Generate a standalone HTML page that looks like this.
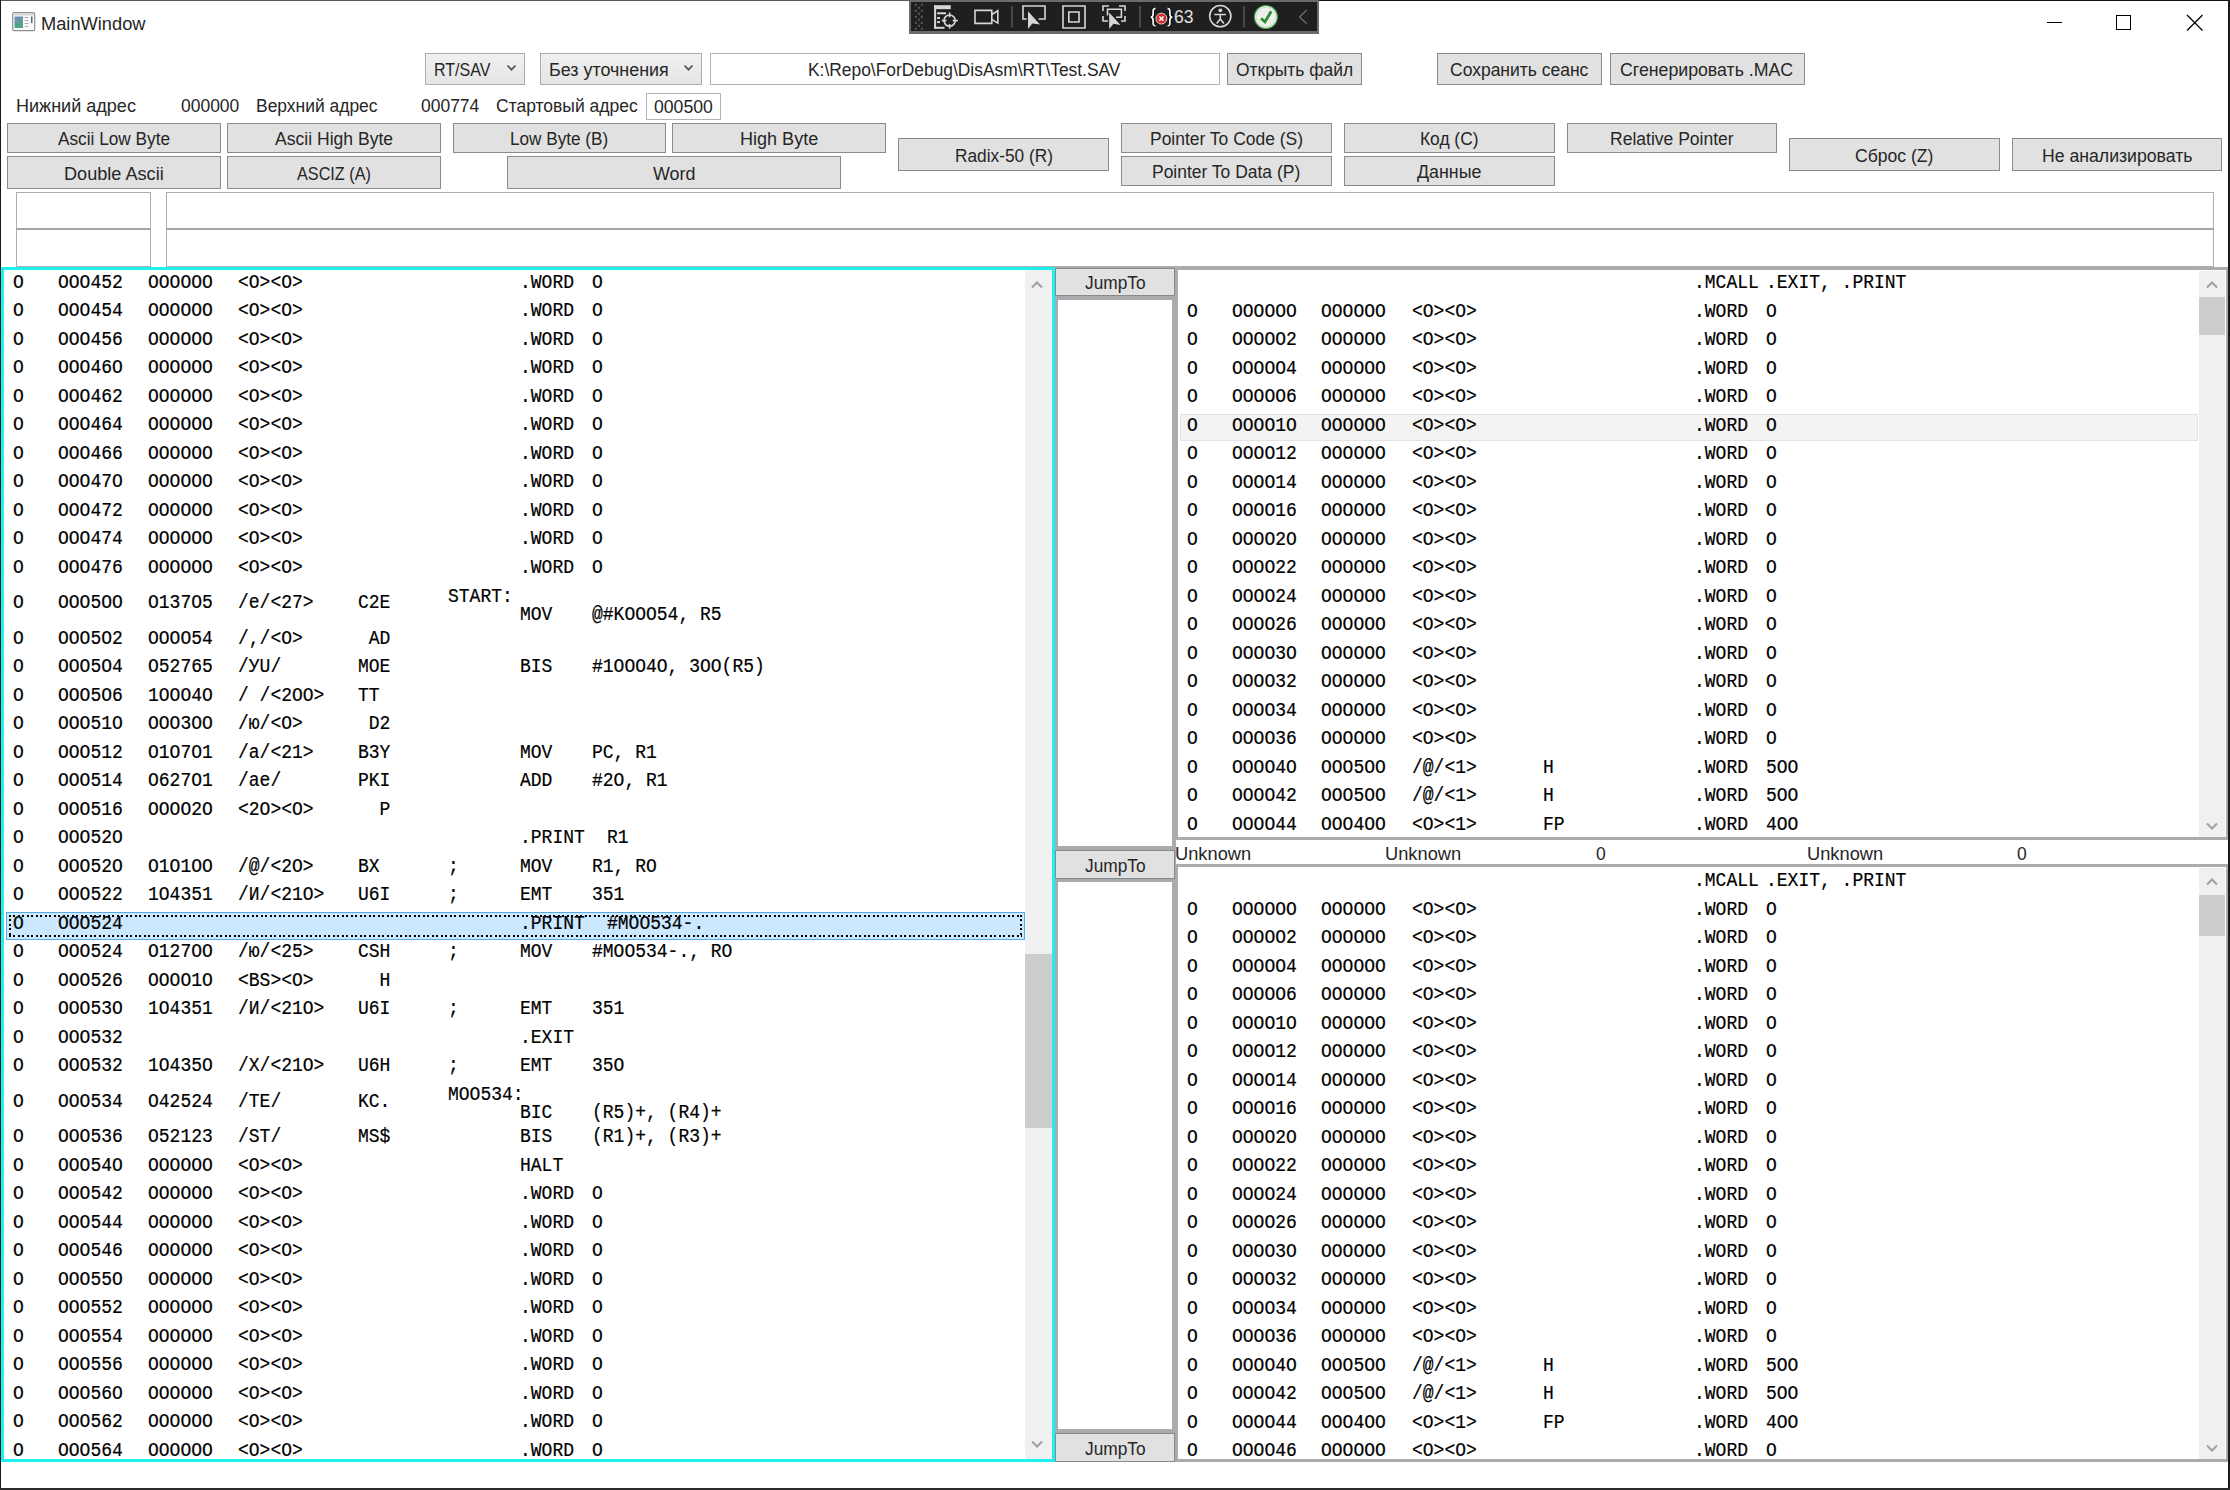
<!DOCTYPE html><html><head><meta charset="utf-8"><style>
html,body{margin:0;padding:0;background:#fff;width:2230px;height:1490px;overflow:hidden}
.a{position:absolute}
.s{position:absolute;font-family:"Liberation Sans",sans-serif;line-height:1;white-space:pre;color:#262626}
.m{position:absolute;font-family:"Liberation Mono",monospace;font-size:19.5px;line-height:1;white-space:pre;color:#000;transform:scaleX(0.9231);transform-origin:0 0;-webkit-text-stroke:0.2px #000}
</style></head><body>
<span class="s" style="left:41.16px;top:15.9px;font-size:17.5px;transform:scaleX(1.0434);transform-origin:0 0">MainWindow</span>
<svg class="a" style="left:12px;top:12px" width="24" height="20" viewBox="0 0 24 20">
<defs><linearGradient id="g1" x1="0" y1="0" x2="0" y2="1"><stop offset="0" stop-color="#6a8fb8"/><stop offset="1" stop-color="#4caa7a"/></linearGradient></defs>
<rect x="0.7" y="0.7" width="22" height="18" rx="1.5" fill="#fafafa" stroke="#8f8f8f" stroke-width="1.2"/>
<rect x="1.5" y="1.5" width="20.5" height="2" fill="#d4d6da"/>
<rect x="2.5" y="4.5" width="8.5" height="11.5" fill="url(#g1)"/>
<rect x="12.5" y="5" width="4" height="1" fill="#c9a0a0"/><rect x="12.5" y="8" width="4" height="1" fill="#b0b0b0"/><rect x="12.5" y="11" width="4" height="1" fill="#b0b0b0"/><rect x="12.5" y="14" width="4" height="1" fill="#b0b0b0"/>
<rect x="19" y="4.5" width="1.5" height="6.5" fill="#3f6a80"/>
</svg>
<div class="a" style="left:2047px;top:22px;width:15px;height:1px;background:#000;"></div>
<div class="a" style="left:2116px;top:15px;width:15px;height:15px;border:1.3px solid #000;box-sizing:border-box"></div>
<svg class="a" style="left:2186px;top:14px" width="18" height="18" viewBox="0 0 18 18"><path d="M1 1L16.5 16.5M16.5 1L1 16.5" stroke="#000" stroke-width="1.3"/></svg>
<div class="a" style="left:909px;top:0px;width:410px;height:34px;background:#6b6b6b"></div>
<div class="a" style="left:911px;top:2px;width:406px;height:29px;background:#1f1f1f"></div>
<svg class="a" style="left:909px;top:0px" width="410" height="34" viewBox="0 0 410 34">
<g fill="#5a5a5a"><rect x="5.8" y="3.7" width="2" height="2"/><rect x="5.8" y="9.8" width="2" height="2"/><rect x="5.8" y="15.8" width="2" height="2"/><rect x="5.8" y="21.9" width="2" height="2"/><rect x="5.8" y="27.7" width="2" height="2"/><rect x="11.8" y="3.7" width="2" height="2"/><rect x="11.8" y="9.8" width="2" height="2"/><rect x="11.8" y="15.8" width="2" height="2"/><rect x="11.8" y="21.9" width="2" height="2"/><rect x="11.8" y="27.7" width="2" height="2"/><rect x="8.9" y="6.8" width="2" height="2"/><rect x="8.9" y="12.7" width="2" height="2"/><rect x="8.9" y="18.7" width="2" height="2"/><rect x="8.9" y="24.8" width="2" height="2"/></g>
<g fill="#d6d6d6">
<rect x="25.1" y="5.2" width="16.6" height="4"/>
<rect x="25.1" y="5.2" width="2" height="23.5"/>
<rect x="25.1" y="26.8" width="10.4" height="2"/>
<rect x="28.1" y="12.3" width="8.9" height="2"/>
<rect x="28.1" y="17" width="2.9" height="2"/>
<rect x="28.1" y="21.1" width="2.9" height="2"/>
</g>
<g stroke="#d6d6d6" fill="none" stroke-width="1.6">
<circle cx="40.6" cy="20.6" r="5.6"/>
<path d="M32.8 20.6H37.5M43.7 20.6H48.9M40.6 12.6V17.3M40.6 23.9V28.7"/>
<path d="M66 10.4H82.8V23.4H66Z"/><path d="M82.8 14.5L88.8 10.8V23.1L82.8 19.4"/>
<path d="M117.7 19H114V6H136V19H129.6"/>
<path d="M154 6H176V28H154Z"/><path d="M159.8 12H170V22H159.8Z"/>
<path d="M200 6H194V11M210 6H216V11M194 16V21H199M216 16V21H212"/>
<path d="M198.5 15.5V9.2H212.4V17.2H207"/>
<circle cx="311.3" cy="16.1" r="10.6"/>
<path d="M305.3 14.5H317M311.3 14.5V19L307.7 23.6M311.3 19L314.9 23.6"/>
</g>
<g stroke="#4a4a4a" stroke-width="2"><path d="M102.9 6V27.6M231 6V27.6M335.1 6V27.4"/></g>
<path d="M119 11.3V29L123.3 23.6L131 24.5Z" fill="#d6d6d6"/>
<path d="M200.2 12.6V29L204.5 23.8L211.5 25.1Z" fill="#d6d6d6"/>
<circle cx="311.3" cy="10.3" r="1.9" fill="#d6d6d6"/>
<path d="M246.5 8.5C243.5 8.5 244.2 11 244.2 13.5C244.2 15.8 243.5 17 241.8 17.2C243.5 17.4 244.2 18.6 244.2 21C244.2 23.5 243.5 25.8 246.5 25.8M258.5 8.5C261.5 8.5 260.8 11 260.8 13.5C260.8 15.8 261.5 17 263.2 17.2C261.5 17.4 260.8 18.6 260.8 21C260.8 23.5 261.5 25.8 258.5 25.8" stroke="#000" stroke-width="3.2" fill="none"/><path d="M246.5 8.5C243.5 8.5 244.2 11 244.2 13.5C244.2 15.8 243.5 17 241.8 17.2C243.5 17.4 244.2 18.6 244.2 21C244.2 23.5 243.5 25.8 246.5 25.8M258.5 8.5C261.5 8.5 260.8 11 260.8 13.5C260.8 15.8 261.5 17 263.2 17.2C261.5 17.4 260.8 18.6 260.8 21C260.8 23.5 261.5 25.8 258.5 25.8" stroke="#f4f4f4" stroke-width="1.8" fill="none"/>
<circle cx="252.4" cy="18.6" r="5.4" fill="#d42a2a" stroke="#fff" stroke-width="0.8"/>
<path d="M250.3 16.5L254.5 20.7M254.5 16.5L250.3 20.7" stroke="#fff" stroke-width="1.6"/>
<text x="265" y="23" font-family="Liberation Sans" font-size="17.5" fill="#e0e0e0">63</text>
<circle cx="356.9" cy="17" r="11.5" fill="#eeeeee" stroke="#3c9c3c" stroke-width="1.2"/>
<circle cx="356.9" cy="17" r="9.8" fill="none" stroke="#bfe0bf" stroke-width="0.8"/>
<path d="M352 18.4L356 21.9L362.2 11.3" stroke="#2b8f2b" stroke-width="2.8" fill="none"/>
<path d="M397.7 10L390.6 16.9L397.7 23.8" stroke="#6a6a6a" stroke-width="1.4" fill="none"/>
</svg>
<div class="a" style="left:425px;top:53px;width:100px;height:32px;background:linear-gradient(#f0f0f0,#e5e5e5);border:1.5px solid #acacac;box-sizing:border-box;"></div>
<span class="s" style="left:434.18px;top:61.9px;font-size:17.5px;transform:scaleX(0.9164);transform-origin:0 0">RT/SAV</span>
<svg class="a" style="left:505.5px;top:64px" width="11" height="8" viewBox="0 0 11 8"><path d="M1.5 1.5L5.5 5.7L9.5 1.5" stroke="#505050" stroke-width="1.7" fill="none"/></svg>
<div class="a" style="left:540px;top:53px;width:162px;height:32px;background:linear-gradient(#f0f0f0,#e5e5e5);border:1.5px solid #acacac;box-sizing:border-box;"></div>
<span class="s" style="left:548.88px;top:61.9px;font-size:17.5px;transform:scaleX(1.0226);transform-origin:0 0">Без уточнения</span>
<svg class="a" style="left:682.5px;top:64px" width="11" height="8" viewBox="0 0 11 8"><path d="M1.5 1.5L5.5 5.7L9.5 1.5" stroke="#505050" stroke-width="1.7" fill="none"/></svg>
<div class="a" style="left:710px;top:53px;width:510px;height:32px;background:#fff;border:1.5px solid #b4b4b4;box-sizing:border-box;"></div>
<span class="s" style="left:808.11px;top:61.9px;font-size:17.5px;transform:scaleX(0.9936);transform-origin:0 0">K:\Repo\ForDebug\DisAsm\RT\Test.SAV</span>
<div class="a" style="left:1227px;top:53px;width:135px;height:32px;background:#e1e1e1;border:1.5px solid #8a8a8a;box-sizing:border-box;"></div>
<span class="s" style="left:1235.61px;top:62.2px;font-size:17.5px;transform:scaleX(0.9948);transform-origin:0 0">Открыть файл</span>
<div class="a" style="left:1437px;top:53px;width:165px;height:32px;background:#e1e1e1;border:1.5px solid #8a8a8a;box-sizing:border-box;"></div>
<span class="s" style="left:1450.00px;top:62.2px;font-size:17.5px;transform:scaleX(0.9993);transform-origin:0 0">Сохранить сеанс</span>
<div class="a" style="left:1610px;top:53px;width:195px;height:32px;background:#e1e1e1;border:1.5px solid #8a8a8a;box-sizing:border-box;"></div>
<span class="s" style="left:1620.39px;top:62.2px;font-size:17.5px;transform:scaleX(1.0130);transform-origin:0 0">Сгенерировать .MAC</span>
<span class="s" style="left:16.27px;top:98.3px;font-size:17.5px;transform:scaleX(1.0304);transform-origin:0 0">Нижний адрес</span>
<span class="s" style="left:180.50px;top:98.3px;font-size:17.5px;transform:scaleX(0.9982);transform-origin:0 0">000000</span>
<span class="s" style="left:256.30px;top:98.3px;font-size:17.5px;transform:scaleX(0.9967);transform-origin:0 0">Верхний адрес</span>
<span class="s" style="left:420.60px;top:98.3px;font-size:17.5px;transform:scaleX(0.9982);transform-origin:0 0">000774</span>
<span class="s" style="left:495.80px;top:98.3px;font-size:17.5px;transform:scaleX(0.9993);transform-origin:0 0">Стартовый адрес</span>
<div class="a" style="left:646px;top:93px;width:75px;height:27px;background:#fff;border:1.5px solid #b4b4b4;box-sizing:border-box;"></div>
<span class="s" style="left:653.59px;top:98.6px;font-size:17.5px;transform:scaleX(1.0070);transform-origin:0 0">000500</span>
<div class="a" style="left:7px;top:123px;width:214px;height:30px;background:#e1e1e1;border:1.5px solid #8a8a8a;box-sizing:border-box;"></div>
<span class="s" style="left:58.30px;top:131.2px;font-size:17.5px;transform:scaleX(0.9850);transform-origin:0 0">Ascii Low Byte</span>
<div class="a" style="left:227px;top:123px;width:214px;height:30px;background:#e1e1e1;border:1.5px solid #8a8a8a;box-sizing:border-box;"></div>
<span class="s" style="left:274.90px;top:131.2px;font-size:17.5px;transform:scaleX(1.0034);transform-origin:0 0">Ascii High Byte</span>
<div class="a" style="left:453px;top:123px;width:213px;height:30px;background:#e1e1e1;border:1.5px solid #8a8a8a;box-sizing:border-box;"></div>
<span class="s" style="left:510.42px;top:131.2px;font-size:17.5px;transform:scaleX(0.9796);transform-origin:0 0">Low Byte (B)</span>
<div class="a" style="left:672px;top:123px;width:214px;height:30px;background:#e1e1e1;border:1.5px solid #8a8a8a;box-sizing:border-box;"></div>
<span class="s" style="left:740.37px;top:131.2px;font-size:17.5px;transform:scaleX(1.0311);transform-origin:0 0">High Byte</span>
<div class="a" style="left:7px;top:156px;width:214px;height:33px;background:#e1e1e1;border:1.5px solid #8a8a8a;box-sizing:border-box;"></div>
<span class="s" style="left:64.26px;top:165.8px;font-size:17.5px;transform:scaleX(1.0351);transform-origin:0 0">Double Ascii</span>
<div class="a" style="left:227px;top:156px;width:214px;height:33px;background:#e1e1e1;border:1.5px solid #8a8a8a;box-sizing:border-box;"></div>
<span class="s" style="left:297.00px;top:165.8px;font-size:17.5px;transform:scaleX(0.9266);transform-origin:0 0">ASCIZ (A)</span>
<div class="a" style="left:507px;top:156px;width:334px;height:33px;background:#e1e1e1;border:1.5px solid #8a8a8a;box-sizing:border-box;"></div>
<span class="s" style="left:653.00px;top:165.8px;font-size:17.5px;transform:scaleX(1.0220);transform-origin:0 0">Word</span>
<div class="a" style="left:898px;top:138px;width:211px;height:33px;background:#e1e1e1;border:1.5px solid #8a8a8a;box-sizing:border-box;"></div>
<span class="s" style="left:954.61px;top:147.8px;font-size:17.5px;transform:scaleX(0.9876);transform-origin:0 0">Radix-50 (R)</span>
<div class="a" style="left:1121px;top:123px;width:211px;height:30px;background:#e1e1e1;border:1.5px solid #8a8a8a;box-sizing:border-box;"></div>
<span class="s" style="left:1150.20px;top:131.2px;font-size:17.5px;transform:scaleX(0.9980);transform-origin:0 0">Pointer To Code (S)</span>
<div class="a" style="left:1121px;top:156px;width:211px;height:30px;background:#e1e1e1;border:1.5px solid #8a8a8a;box-sizing:border-box;"></div>
<span class="s" style="left:1152.20px;top:164.2px;font-size:17.5px;transform:scaleX(0.9980);transform-origin:0 0">Pointer To Data (P)</span>
<div class="a" style="left:1344px;top:123px;width:211px;height:30px;background:#e1e1e1;border:1.5px solid #8a8a8a;box-sizing:border-box;"></div>
<span class="s" style="left:1419.81px;top:131.2px;font-size:17.5px;transform:scaleX(0.9930);transform-origin:0 0">Код (C)</span>
<div class="a" style="left:1344px;top:156px;width:211px;height:30px;background:#e1e1e1;border:1.5px solid #8a8a8a;box-sizing:border-box;"></div>
<span class="s" style="left:1416.90px;top:164.2px;font-size:17.5px;transform:scaleX(1.0175);transform-origin:0 0">Данные</span>
<div class="a" style="left:1567px;top:123px;width:210px;height:30px;background:#e1e1e1;border:1.5px solid #8a8a8a;box-sizing:border-box;"></div>
<span class="s" style="left:1610.00px;top:131.2px;font-size:17.5px;transform:scaleX(1.0008);transform-origin:0 0">Relative Pointer</span>
<div class="a" style="left:1789px;top:138px;width:211px;height:33px;background:#e1e1e1;border:1.5px solid #8a8a8a;box-sizing:border-box;"></div>
<span class="s" style="left:1855.30px;top:147.8px;font-size:17.5px;transform:scaleX(1.0039);transform-origin:0 0">Сброс (Z)</span>
<div class="a" style="left:2012px;top:138px;width:210px;height:33px;background:#e1e1e1;border:1.5px solid #8a8a8a;box-sizing:border-box;"></div>
<span class="s" style="left:2041.69px;top:147.8px;font-size:17.5px;transform:scaleX(1.0088);transform-origin:0 0">Не анализировать</span>
<div class="a" style="left:16px;top:192px;width:135px;height:75px;border:1px solid #adadad;box-sizing:border-box;"></div>
<div class="a" style="left:16px;top:228px;width:135px;height:2px;background:#a5a5a5;"></div>
<div class="a" style="left:166px;top:192px;width:2048px;height:75px;border:1px solid #adadad;box-sizing:border-box;"></div>
<div class="a" style="left:166px;top:228px;width:2048px;height:2px;background:#a5a5a5;"></div>
<div class="a" style="left:1px;top:267px;width:1054px;height:1195px;background:#fff;border:3px solid #1ef0f0;box-sizing:border-box;"></div>
<div class="a" style="left:1025px;top:270px;width:27px;height:1189px;background:#f0f0f0;"></div>
<div class="a" style="left:1025px;top:954px;width:27px;height:174px;background:#cdcdcd;"></div>
<svg class="a" style="left:1031px;top:280px" width="12" height="9" viewBox="0 0 12 9"><path d="M1 7.5L6 2.5L11 7.5" stroke="#a0a0a0" stroke-width="2" fill="none"/></svg>
<svg class="a" style="left:1031px;top:1440px" width="12" height="9" viewBox="0 0 12 9"><path d="M1 1.5L6 6.5L11 1.5" stroke="#a0a0a0" stroke-width="2" fill="none"/></svg>
<span class="m" style="left:12.5px;top:273.5px;">O</span>
<span class="m" style="left:57.8px;top:273.5px;">OOO452</span>
<span class="m" style="left:147.9px;top:273.5px;">OOOOOO</span>
<span class="m" style="left:237.8px;top:273.5px;">&lt;O&gt;&lt;O&gt;</span>
<span class="m" style="left:520.2px;top:273.5px;">.WORD</span>
<span class="m" style="left:592.2px;top:273.5px;">O</span>
<span class="m" style="left:12.5px;top:302.0px;">O</span>
<span class="m" style="left:57.8px;top:302.0px;">OOO454</span>
<span class="m" style="left:147.9px;top:302.0px;">OOOOOO</span>
<span class="m" style="left:237.8px;top:302.0px;">&lt;O&gt;&lt;O&gt;</span>
<span class="m" style="left:520.2px;top:302.0px;">.WORD</span>
<span class="m" style="left:592.2px;top:302.0px;">O</span>
<span class="m" style="left:12.5px;top:330.5px;">O</span>
<span class="m" style="left:57.8px;top:330.5px;">OOO456</span>
<span class="m" style="left:147.9px;top:330.5px;">OOOOOO</span>
<span class="m" style="left:237.8px;top:330.5px;">&lt;O&gt;&lt;O&gt;</span>
<span class="m" style="left:520.2px;top:330.5px;">.WORD</span>
<span class="m" style="left:592.2px;top:330.5px;">O</span>
<span class="m" style="left:12.5px;top:359.0px;">O</span>
<span class="m" style="left:57.8px;top:359.0px;">OOO46O</span>
<span class="m" style="left:147.9px;top:359.0px;">OOOOOO</span>
<span class="m" style="left:237.8px;top:359.0px;">&lt;O&gt;&lt;O&gt;</span>
<span class="m" style="left:520.2px;top:359.0px;">.WORD</span>
<span class="m" style="left:592.2px;top:359.0px;">O</span>
<span class="m" style="left:12.5px;top:387.5px;">O</span>
<span class="m" style="left:57.8px;top:387.5px;">OOO462</span>
<span class="m" style="left:147.9px;top:387.5px;">OOOOOO</span>
<span class="m" style="left:237.8px;top:387.5px;">&lt;O&gt;&lt;O&gt;</span>
<span class="m" style="left:520.2px;top:387.5px;">.WORD</span>
<span class="m" style="left:592.2px;top:387.5px;">O</span>
<span class="m" style="left:12.5px;top:416.0px;">O</span>
<span class="m" style="left:57.8px;top:416.0px;">OOO464</span>
<span class="m" style="left:147.9px;top:416.0px;">OOOOOO</span>
<span class="m" style="left:237.8px;top:416.0px;">&lt;O&gt;&lt;O&gt;</span>
<span class="m" style="left:520.2px;top:416.0px;">.WORD</span>
<span class="m" style="left:592.2px;top:416.0px;">O</span>
<span class="m" style="left:12.5px;top:444.5px;">O</span>
<span class="m" style="left:57.8px;top:444.5px;">OOO466</span>
<span class="m" style="left:147.9px;top:444.5px;">OOOOOO</span>
<span class="m" style="left:237.8px;top:444.5px;">&lt;O&gt;&lt;O&gt;</span>
<span class="m" style="left:520.2px;top:444.5px;">.WORD</span>
<span class="m" style="left:592.2px;top:444.5px;">O</span>
<span class="m" style="left:12.5px;top:473.0px;">O</span>
<span class="m" style="left:57.8px;top:473.0px;">OOO47O</span>
<span class="m" style="left:147.9px;top:473.0px;">OOOOOO</span>
<span class="m" style="left:237.8px;top:473.0px;">&lt;O&gt;&lt;O&gt;</span>
<span class="m" style="left:520.2px;top:473.0px;">.WORD</span>
<span class="m" style="left:592.2px;top:473.0px;">O</span>
<span class="m" style="left:12.5px;top:501.5px;">O</span>
<span class="m" style="left:57.8px;top:501.5px;">OOO472</span>
<span class="m" style="left:147.9px;top:501.5px;">OOOOOO</span>
<span class="m" style="left:237.8px;top:501.5px;">&lt;O&gt;&lt;O&gt;</span>
<span class="m" style="left:520.2px;top:501.5px;">.WORD</span>
<span class="m" style="left:592.2px;top:501.5px;">O</span>
<span class="m" style="left:12.5px;top:530.0px;">O</span>
<span class="m" style="left:57.8px;top:530.0px;">OOO474</span>
<span class="m" style="left:147.9px;top:530.0px;">OOOOOO</span>
<span class="m" style="left:237.8px;top:530.0px;">&lt;O&gt;&lt;O&gt;</span>
<span class="m" style="left:520.2px;top:530.0px;">.WORD</span>
<span class="m" style="left:592.2px;top:530.0px;">O</span>
<span class="m" style="left:12.5px;top:558.5px;">O</span>
<span class="m" style="left:57.8px;top:558.5px;">OOO476</span>
<span class="m" style="left:147.9px;top:558.5px;">OOOOOO</span>
<span class="m" style="left:237.8px;top:558.5px;">&lt;O&gt;&lt;O&gt;</span>
<span class="m" style="left:520.2px;top:558.5px;">.WORD</span>
<span class="m" style="left:592.2px;top:558.5px;">O</span>
<span class="m" style="left:12.5px;top:594.0px;">O</span>
<span class="m" style="left:57.8px;top:594.0px;">OOO5OO</span>
<span class="m" style="left:147.9px;top:594.0px;">O137O5</span>
<span class="m" style="left:237.8px;top:594.0px;">/e/&lt;27&gt;</span>
<span class="m" style="left:357.9px;top:594.0px;">C2E</span>
<span class="m" style="left:447.5px;top:587.5px;">START:</span>
<span class="m" style="left:520.2px;top:605.5px;">MOV</span>
<span class="m" style="left:592.2px;top:605.5px;">@#KOOO54, R5</span>
<span class="m" style="left:12.5px;top:629.5px;">O</span>
<span class="m" style="left:57.8px;top:629.5px;">OOO5O2</span>
<span class="m" style="left:147.9px;top:629.5px;">OOOO54</span>
<span class="m" style="left:237.8px;top:629.5px;">/,/&lt;O&gt;</span>
<span class="m" style="left:357.9px;top:629.5px;"> AD</span>
<span class="m" style="left:12.5px;top:658.0px;">O</span>
<span class="m" style="left:57.8px;top:658.0px;">OOO5O4</span>
<span class="m" style="left:147.9px;top:658.0px;">O52765</span>
<span class="m" style="left:237.8px;top:658.0px;">/УU/</span>
<span class="m" style="left:357.9px;top:658.0px;">MOE</span>
<span class="m" style="left:520.2px;top:658.0px;">BIS</span>
<span class="m" style="left:592.2px;top:658.0px;">#1OOO4O, 3OO(R5)</span>
<span class="m" style="left:12.5px;top:686.5px;">O</span>
<span class="m" style="left:57.8px;top:686.5px;">OOO5O6</span>
<span class="m" style="left:147.9px;top:686.5px;">1OOO4O</span>
<span class="m" style="left:237.8px;top:686.5px;">/ /&lt;2OO&gt;</span>
<span class="m" style="left:357.9px;top:686.5px;">TT</span>
<span class="m" style="left:12.5px;top:715.0px;">O</span>
<span class="m" style="left:57.8px;top:715.0px;">OOO51O</span>
<span class="m" style="left:147.9px;top:715.0px;">OOO3OO</span>
<span class="m" style="left:237.8px;top:715.0px;">/ю/&lt;O&gt;</span>
<span class="m" style="left:357.9px;top:715.0px;"> D2</span>
<span class="m" style="left:12.5px;top:743.5px;">O</span>
<span class="m" style="left:57.8px;top:743.5px;">OOO512</span>
<span class="m" style="left:147.9px;top:743.5px;">O1O7O1</span>
<span class="m" style="left:237.8px;top:743.5px;">/a/&lt;21&gt;</span>
<span class="m" style="left:357.9px;top:743.5px;">B3Y</span>
<span class="m" style="left:520.2px;top:743.5px;">MOV</span>
<span class="m" style="left:592.2px;top:743.5px;">PC, R1</span>
<span class="m" style="left:12.5px;top:772.0px;">O</span>
<span class="m" style="left:57.8px;top:772.0px;">OOO514</span>
<span class="m" style="left:147.9px;top:772.0px;">O627O1</span>
<span class="m" style="left:237.8px;top:772.0px;">/ae/</span>
<span class="m" style="left:357.9px;top:772.0px;">PKI</span>
<span class="m" style="left:520.2px;top:772.0px;">ADD</span>
<span class="m" style="left:592.2px;top:772.0px;">#2O, R1</span>
<span class="m" style="left:12.5px;top:800.5px;">O</span>
<span class="m" style="left:57.8px;top:800.5px;">OOO516</span>
<span class="m" style="left:147.9px;top:800.5px;">OOOO2O</span>
<span class="m" style="left:237.8px;top:800.5px;">&lt;2O&gt;&lt;O&gt;</span>
<span class="m" style="left:357.9px;top:800.5px;">  P</span>
<span class="m" style="left:12.5px;top:829.0px;">O</span>
<span class="m" style="left:57.8px;top:829.0px;">OOO52O</span>
<span class="m" style="left:520.2px;top:829.0px;">.PRINT</span>
<span class="m" style="left:606.6px;top:829.0px;">R1</span>
<span class="m" style="left:12.5px;top:857.5px;">O</span>
<span class="m" style="left:57.8px;top:857.5px;">OOO52O</span>
<span class="m" style="left:147.9px;top:857.5px;">O1O1OO</span>
<span class="m" style="left:237.8px;top:857.5px;">/@/&lt;2O&gt;</span>
<span class="m" style="left:357.9px;top:857.5px;">BX</span>
<span class="m" style="left:447.5px;top:857.5px;">;</span>
<span class="m" style="left:520.2px;top:857.5px;">MOV</span>
<span class="m" style="left:592.2px;top:857.5px;">R1, RO</span>
<span class="m" style="left:12.5px;top:886.0px;">O</span>
<span class="m" style="left:57.8px;top:886.0px;">OOO522</span>
<span class="m" style="left:147.9px;top:886.0px;">1O4351</span>
<span class="m" style="left:237.8px;top:886.0px;">/И/&lt;21O&gt;</span>
<span class="m" style="left:357.9px;top:886.0px;">U6I</span>
<span class="m" style="left:447.5px;top:886.0px;">;</span>
<span class="m" style="left:520.2px;top:886.0px;">EMT</span>
<span class="m" style="left:592.2px;top:886.0px;">351</span>
<div class="a" style="left:6px;top:912px;width:1019px;height:28px;background:#cce8ff;border:1.5px solid #5aa9e0;box-sizing:border-box;"></div>
<div class="a" style="left:9px;top:915px;width:1013px;height:1.6px;background:repeating-linear-gradient(90deg,#000 0 1.6px,transparent 1.6px 4.5px)"></div>
<div class="a" style="left:9px;top:935.4px;width:1013px;height:1.6px;background:repeating-linear-gradient(90deg,#000 0 1.6px,transparent 1.6px 4.5px)"></div>
<div class="a" style="left:9px;top:915px;width:1.6px;height:22px;background:repeating-linear-gradient(180deg,#000 0 1.6px,transparent 1.6px 4.5px)"></div>
<div class="a" style="left:1020.4px;top:915px;width:1.6px;height:22px;background:repeating-linear-gradient(180deg,#000 0 1.6px,transparent 1.6px 4.5px)"></div>
<span class="m" style="left:12.5px;top:914.5px;">O</span>
<span class="m" style="left:57.8px;top:914.5px;">OOO524</span>
<span class="m" style="left:520.2px;top:914.5px;">.PRINT</span>
<span class="m" style="left:606.6px;top:914.5px;">#MOO534-.</span>
<span class="m" style="left:12.5px;top:943.0px;">O</span>
<span class="m" style="left:57.8px;top:943.0px;">OOO524</span>
<span class="m" style="left:147.9px;top:943.0px;">O127OO</span>
<span class="m" style="left:237.8px;top:943.0px;">/ю/&lt;25&gt;</span>
<span class="m" style="left:357.9px;top:943.0px;">CSH</span>
<span class="m" style="left:447.5px;top:943.0px;">;</span>
<span class="m" style="left:520.2px;top:943.0px;">MOV</span>
<span class="m" style="left:592.2px;top:943.0px;">#MOO534-., RO</span>
<span class="m" style="left:12.5px;top:971.5px;">O</span>
<span class="m" style="left:57.8px;top:971.5px;">OOO526</span>
<span class="m" style="left:147.9px;top:971.5px;">OOOO1O</span>
<span class="m" style="left:237.8px;top:971.5px;">&lt;BS&gt;&lt;O&gt;</span>
<span class="m" style="left:357.9px;top:971.5px;">  H</span>
<span class="m" style="left:12.5px;top:1000.0px;">O</span>
<span class="m" style="left:57.8px;top:1000.0px;">OOO53O</span>
<span class="m" style="left:147.9px;top:1000.0px;">1O4351</span>
<span class="m" style="left:237.8px;top:1000.0px;">/И/&lt;21O&gt;</span>
<span class="m" style="left:357.9px;top:1000.0px;">U6I</span>
<span class="m" style="left:447.5px;top:1000.0px;">;</span>
<span class="m" style="left:520.2px;top:1000.0px;">EMT</span>
<span class="m" style="left:592.2px;top:1000.0px;">351</span>
<span class="m" style="left:12.5px;top:1028.5px;">O</span>
<span class="m" style="left:57.8px;top:1028.5px;">OOO532</span>
<span class="m" style="left:520.2px;top:1028.5px;">.EXIT</span>
<span class="m" style="left:12.5px;top:1057.0px;">O</span>
<span class="m" style="left:57.8px;top:1057.0px;">OOO532</span>
<span class="m" style="left:147.9px;top:1057.0px;">1O435O</span>
<span class="m" style="left:237.8px;top:1057.0px;">/X/&lt;21O&gt;</span>
<span class="m" style="left:357.9px;top:1057.0px;">U6H</span>
<span class="m" style="left:447.5px;top:1057.0px;">;</span>
<span class="m" style="left:520.2px;top:1057.0px;">EMT</span>
<span class="m" style="left:592.2px;top:1057.0px;">35O</span>
<span class="m" style="left:12.5px;top:1092.5px;">O</span>
<span class="m" style="left:57.8px;top:1092.5px;">OOO534</span>
<span class="m" style="left:147.9px;top:1092.5px;">O42524</span>
<span class="m" style="left:237.8px;top:1092.5px;">/TE/</span>
<span class="m" style="left:357.9px;top:1092.5px;">KC.</span>
<span class="m" style="left:447.5px;top:1086.0px;">MOO534:</span>
<span class="m" style="left:520.2px;top:1104.0px;">BIC</span>
<span class="m" style="left:592.2px;top:1104.0px;">(R5)+, (R4)+</span>
<span class="m" style="left:12.5px;top:1128.0px;">O</span>
<span class="m" style="left:57.8px;top:1128.0px;">OOO536</span>
<span class="m" style="left:147.9px;top:1128.0px;">O52123</span>
<span class="m" style="left:237.8px;top:1128.0px;">/ST/</span>
<span class="m" style="left:357.9px;top:1128.0px;">MS$</span>
<span class="m" style="left:520.2px;top:1128.0px;">BIS</span>
<span class="m" style="left:592.2px;top:1128.0px;">(R1)+, (R3)+</span>
<span class="m" style="left:12.5px;top:1156.5px;">O</span>
<span class="m" style="left:57.8px;top:1156.5px;">OOO54O</span>
<span class="m" style="left:147.9px;top:1156.5px;">OOOOOO</span>
<span class="m" style="left:237.8px;top:1156.5px;">&lt;O&gt;&lt;O&gt;</span>
<span class="m" style="left:520.2px;top:1156.5px;">HALT</span>
<span class="m" style="left:12.5px;top:1185.0px;">O</span>
<span class="m" style="left:57.8px;top:1185.0px;">OOO542</span>
<span class="m" style="left:147.9px;top:1185.0px;">OOOOOO</span>
<span class="m" style="left:237.8px;top:1185.0px;">&lt;O&gt;&lt;O&gt;</span>
<span class="m" style="left:520.2px;top:1185.0px;">.WORD</span>
<span class="m" style="left:592.2px;top:1185.0px;">O</span>
<span class="m" style="left:12.5px;top:1213.5px;">O</span>
<span class="m" style="left:57.8px;top:1213.5px;">OOO544</span>
<span class="m" style="left:147.9px;top:1213.5px;">OOOOOO</span>
<span class="m" style="left:237.8px;top:1213.5px;">&lt;O&gt;&lt;O&gt;</span>
<span class="m" style="left:520.2px;top:1213.5px;">.WORD</span>
<span class="m" style="left:592.2px;top:1213.5px;">O</span>
<span class="m" style="left:12.5px;top:1242.0px;">O</span>
<span class="m" style="left:57.8px;top:1242.0px;">OOO546</span>
<span class="m" style="left:147.9px;top:1242.0px;">OOOOOO</span>
<span class="m" style="left:237.8px;top:1242.0px;">&lt;O&gt;&lt;O&gt;</span>
<span class="m" style="left:520.2px;top:1242.0px;">.WORD</span>
<span class="m" style="left:592.2px;top:1242.0px;">O</span>
<span class="m" style="left:12.5px;top:1270.5px;">O</span>
<span class="m" style="left:57.8px;top:1270.5px;">OOO55O</span>
<span class="m" style="left:147.9px;top:1270.5px;">OOOOOO</span>
<span class="m" style="left:237.8px;top:1270.5px;">&lt;O&gt;&lt;O&gt;</span>
<span class="m" style="left:520.2px;top:1270.5px;">.WORD</span>
<span class="m" style="left:592.2px;top:1270.5px;">O</span>
<span class="m" style="left:12.5px;top:1299.0px;">O</span>
<span class="m" style="left:57.8px;top:1299.0px;">OOO552</span>
<span class="m" style="left:147.9px;top:1299.0px;">OOOOOO</span>
<span class="m" style="left:237.8px;top:1299.0px;">&lt;O&gt;&lt;O&gt;</span>
<span class="m" style="left:520.2px;top:1299.0px;">.WORD</span>
<span class="m" style="left:592.2px;top:1299.0px;">O</span>
<span class="m" style="left:12.5px;top:1327.5px;">O</span>
<span class="m" style="left:57.8px;top:1327.5px;">OOO554</span>
<span class="m" style="left:147.9px;top:1327.5px;">OOOOOO</span>
<span class="m" style="left:237.8px;top:1327.5px;">&lt;O&gt;&lt;O&gt;</span>
<span class="m" style="left:520.2px;top:1327.5px;">.WORD</span>
<span class="m" style="left:592.2px;top:1327.5px;">O</span>
<span class="m" style="left:12.5px;top:1356.0px;">O</span>
<span class="m" style="left:57.8px;top:1356.0px;">OOO556</span>
<span class="m" style="left:147.9px;top:1356.0px;">OOOOOO</span>
<span class="m" style="left:237.8px;top:1356.0px;">&lt;O&gt;&lt;O&gt;</span>
<span class="m" style="left:520.2px;top:1356.0px;">.WORD</span>
<span class="m" style="left:592.2px;top:1356.0px;">O</span>
<span class="m" style="left:12.5px;top:1384.5px;">O</span>
<span class="m" style="left:57.8px;top:1384.5px;">OOO56O</span>
<span class="m" style="left:147.9px;top:1384.5px;">OOOOOO</span>
<span class="m" style="left:237.8px;top:1384.5px;">&lt;O&gt;&lt;O&gt;</span>
<span class="m" style="left:520.2px;top:1384.5px;">.WORD</span>
<span class="m" style="left:592.2px;top:1384.5px;">O</span>
<span class="m" style="left:12.5px;top:1413.0px;">O</span>
<span class="m" style="left:57.8px;top:1413.0px;">OOO562</span>
<span class="m" style="left:147.9px;top:1413.0px;">OOOOOO</span>
<span class="m" style="left:237.8px;top:1413.0px;">&lt;O&gt;&lt;O&gt;</span>
<span class="m" style="left:520.2px;top:1413.0px;">.WORD</span>
<span class="m" style="left:592.2px;top:1413.0px;">O</span>
<span class="m" style="left:12.5px;top:1441.5px;">O</span>
<span class="m" style="left:57.8px;top:1441.5px;">OOO564</span>
<span class="m" style="left:147.9px;top:1441.5px;">OOOOOO</span>
<span class="m" style="left:237.8px;top:1441.5px;">&lt;O&gt;&lt;O&gt;</span>
<span class="m" style="left:520.2px;top:1441.5px;">.WORD</span>
<span class="m" style="left:592.2px;top:1441.5px;">O</span>
<div class="a" style="left:1055px;top:267px;width:121px;height:1195px;background:#a9abaf;"></div>
<div class="a" style="left:1058px;top:300px;width:114px;height:546px;background:#fff;"></div>
<div class="a" style="left:1058px;top:882px;width:114px;height:547px;background:#fff;"></div>
<div class="a" style="left:1055px;top:268px;width:120px;height:28px;background:#e1e1e1;border:1.5px solid #8a8a8a;box-sizing:border-box;"></div>
<span class="s" style="left:1084.90px;top:275.2px;font-size:17.5px;transform:scaleX(0.9885);transform-origin:0 0">JumpTo</span>
<div class="a" style="left:1055px;top:850px;width:120px;height:29px;background:#e1e1e1;border:1.5px solid #8a8a8a;box-sizing:border-box;"></div>
<span class="s" style="left:1084.90px;top:857.8px;font-size:17.5px;transform:scaleX(0.9885);transform-origin:0 0">JumpTo</span>
<div class="a" style="left:1055px;top:1433px;width:120px;height:29px;background:#e1e1e1;border:1.5px solid #8a8a8a;box-sizing:border-box;"></div>
<span class="s" style="left:1084.90px;top:1440.8px;font-size:17.5px;transform:scaleX(0.9885);transform-origin:0 0">JumpTo</span>
<div class="a" style="left:1175px;top:267px;width:1054px;height:573px;background:#a9abaf;"></div>
<div class="a" style="left:1178px;top:270px;width:1048px;height:567px;background:#fff;"></div>
<div class="a" style="left:2199px;top:271px;width:26px;height:566px;background:#f0f0f0;"></div>
<div class="a" style="left:2199px;top:297px;width:26px;height:38px;background:#cdcdcd;"></div>
<svg class="a" style="left:2206px;top:280px" width="12" height="9" viewBox="0 0 12 9"><path d="M1 7.5L6 2.5L11 7.5" stroke="#a0a0a0" stroke-width="2" fill="none"/></svg>
<svg class="a" style="left:2206px;top:822px" width="12" height="9" viewBox="0 0 12 9"><path d="M1 1.5L6 6.5L11 1.5" stroke="#a0a0a0" stroke-width="2" fill="none"/></svg>
<div class="a" style="left:1180px;top:414px;width:1018px;height:27px;background:#f3f3f3;border:1px solid #e3e3e3;box-sizing:border-box;"></div>
<span class="m" style="left:1693.5px;top:274.3px;">.MCALL</span>
<span class="m" style="left:1765.9px;top:274.3px;">.EXIT, .PRINT</span>
<span class="m" style="left:1186.7px;top:302.8px;">O</span>
<span class="m" style="left:1231.7px;top:302.8px;">OOOOOO</span>
<span class="m" style="left:1321.3px;top:302.8px;">OOOOOO</span>
<span class="m" style="left:1411.6px;top:302.8px;">&lt;O&gt;&lt;O&gt;</span>
<span class="m" style="left:1693.5px;top:302.8px;">.WORD</span>
<span class="m" style="left:1765.5px;top:302.8px;">O</span>
<span class="m" style="left:1186.7px;top:331.3px;">O</span>
<span class="m" style="left:1231.7px;top:331.3px;">OOOOO2</span>
<span class="m" style="left:1321.3px;top:331.3px;">OOOOOO</span>
<span class="m" style="left:1411.6px;top:331.3px;">&lt;O&gt;&lt;O&gt;</span>
<span class="m" style="left:1693.5px;top:331.3px;">.WORD</span>
<span class="m" style="left:1765.5px;top:331.3px;">O</span>
<span class="m" style="left:1186.7px;top:359.8px;">O</span>
<span class="m" style="left:1231.7px;top:359.8px;">OOOOO4</span>
<span class="m" style="left:1321.3px;top:359.8px;">OOOOOO</span>
<span class="m" style="left:1411.6px;top:359.8px;">&lt;O&gt;&lt;O&gt;</span>
<span class="m" style="left:1693.5px;top:359.8px;">.WORD</span>
<span class="m" style="left:1765.5px;top:359.8px;">O</span>
<span class="m" style="left:1186.7px;top:388.3px;">O</span>
<span class="m" style="left:1231.7px;top:388.3px;">OOOOO6</span>
<span class="m" style="left:1321.3px;top:388.3px;">OOOOOO</span>
<span class="m" style="left:1411.6px;top:388.3px;">&lt;O&gt;&lt;O&gt;</span>
<span class="m" style="left:1693.5px;top:388.3px;">.WORD</span>
<span class="m" style="left:1765.5px;top:388.3px;">O</span>
<span class="m" style="left:1186.7px;top:416.8px;">O</span>
<span class="m" style="left:1231.7px;top:416.8px;">OOOO1O</span>
<span class="m" style="left:1321.3px;top:416.8px;">OOOOOO</span>
<span class="m" style="left:1411.6px;top:416.8px;">&lt;O&gt;&lt;O&gt;</span>
<span class="m" style="left:1693.5px;top:416.8px;">.WORD</span>
<span class="m" style="left:1765.5px;top:416.8px;">O</span>
<span class="m" style="left:1186.7px;top:445.3px;">O</span>
<span class="m" style="left:1231.7px;top:445.3px;">OOOO12</span>
<span class="m" style="left:1321.3px;top:445.3px;">OOOOOO</span>
<span class="m" style="left:1411.6px;top:445.3px;">&lt;O&gt;&lt;O&gt;</span>
<span class="m" style="left:1693.5px;top:445.3px;">.WORD</span>
<span class="m" style="left:1765.5px;top:445.3px;">O</span>
<span class="m" style="left:1186.7px;top:473.8px;">O</span>
<span class="m" style="left:1231.7px;top:473.8px;">OOOO14</span>
<span class="m" style="left:1321.3px;top:473.8px;">OOOOOO</span>
<span class="m" style="left:1411.6px;top:473.8px;">&lt;O&gt;&lt;O&gt;</span>
<span class="m" style="left:1693.5px;top:473.8px;">.WORD</span>
<span class="m" style="left:1765.5px;top:473.8px;">O</span>
<span class="m" style="left:1186.7px;top:502.3px;">O</span>
<span class="m" style="left:1231.7px;top:502.3px;">OOOO16</span>
<span class="m" style="left:1321.3px;top:502.3px;">OOOOOO</span>
<span class="m" style="left:1411.6px;top:502.3px;">&lt;O&gt;&lt;O&gt;</span>
<span class="m" style="left:1693.5px;top:502.3px;">.WORD</span>
<span class="m" style="left:1765.5px;top:502.3px;">O</span>
<span class="m" style="left:1186.7px;top:530.8px;">O</span>
<span class="m" style="left:1231.7px;top:530.8px;">OOOO2O</span>
<span class="m" style="left:1321.3px;top:530.8px;">OOOOOO</span>
<span class="m" style="left:1411.6px;top:530.8px;">&lt;O&gt;&lt;O&gt;</span>
<span class="m" style="left:1693.5px;top:530.8px;">.WORD</span>
<span class="m" style="left:1765.5px;top:530.8px;">O</span>
<span class="m" style="left:1186.7px;top:559.3px;">O</span>
<span class="m" style="left:1231.7px;top:559.3px;">OOOO22</span>
<span class="m" style="left:1321.3px;top:559.3px;">OOOOOO</span>
<span class="m" style="left:1411.6px;top:559.3px;">&lt;O&gt;&lt;O&gt;</span>
<span class="m" style="left:1693.5px;top:559.3px;">.WORD</span>
<span class="m" style="left:1765.5px;top:559.3px;">O</span>
<span class="m" style="left:1186.7px;top:587.8px;">O</span>
<span class="m" style="left:1231.7px;top:587.8px;">OOOO24</span>
<span class="m" style="left:1321.3px;top:587.8px;">OOOOOO</span>
<span class="m" style="left:1411.6px;top:587.8px;">&lt;O&gt;&lt;O&gt;</span>
<span class="m" style="left:1693.5px;top:587.8px;">.WORD</span>
<span class="m" style="left:1765.5px;top:587.8px;">O</span>
<span class="m" style="left:1186.7px;top:616.3px;">O</span>
<span class="m" style="left:1231.7px;top:616.3px;">OOOO26</span>
<span class="m" style="left:1321.3px;top:616.3px;">OOOOOO</span>
<span class="m" style="left:1411.6px;top:616.3px;">&lt;O&gt;&lt;O&gt;</span>
<span class="m" style="left:1693.5px;top:616.3px;">.WORD</span>
<span class="m" style="left:1765.5px;top:616.3px;">O</span>
<span class="m" style="left:1186.7px;top:644.8px;">O</span>
<span class="m" style="left:1231.7px;top:644.8px;">OOOO3O</span>
<span class="m" style="left:1321.3px;top:644.8px;">OOOOOO</span>
<span class="m" style="left:1411.6px;top:644.8px;">&lt;O&gt;&lt;O&gt;</span>
<span class="m" style="left:1693.5px;top:644.8px;">.WORD</span>
<span class="m" style="left:1765.5px;top:644.8px;">O</span>
<span class="m" style="left:1186.7px;top:673.3px;">O</span>
<span class="m" style="left:1231.7px;top:673.3px;">OOOO32</span>
<span class="m" style="left:1321.3px;top:673.3px;">OOOOOO</span>
<span class="m" style="left:1411.6px;top:673.3px;">&lt;O&gt;&lt;O&gt;</span>
<span class="m" style="left:1693.5px;top:673.3px;">.WORD</span>
<span class="m" style="left:1765.5px;top:673.3px;">O</span>
<span class="m" style="left:1186.7px;top:701.8px;">O</span>
<span class="m" style="left:1231.7px;top:701.8px;">OOOO34</span>
<span class="m" style="left:1321.3px;top:701.8px;">OOOOOO</span>
<span class="m" style="left:1411.6px;top:701.8px;">&lt;O&gt;&lt;O&gt;</span>
<span class="m" style="left:1693.5px;top:701.8px;">.WORD</span>
<span class="m" style="left:1765.5px;top:701.8px;">O</span>
<span class="m" style="left:1186.7px;top:730.3px;">O</span>
<span class="m" style="left:1231.7px;top:730.3px;">OOOO36</span>
<span class="m" style="left:1321.3px;top:730.3px;">OOOOOO</span>
<span class="m" style="left:1411.6px;top:730.3px;">&lt;O&gt;&lt;O&gt;</span>
<span class="m" style="left:1693.5px;top:730.3px;">.WORD</span>
<span class="m" style="left:1765.5px;top:730.3px;">O</span>
<span class="m" style="left:1186.7px;top:758.8px;">O</span>
<span class="m" style="left:1231.7px;top:758.8px;">OOOO4O</span>
<span class="m" style="left:1321.3px;top:758.8px;">OOO5OO</span>
<span class="m" style="left:1411.6px;top:758.8px;">/@/&lt;1&gt;</span>
<span class="m" style="left:1542.5px;top:758.8px;">H</span>
<span class="m" style="left:1693.5px;top:758.8px;">.WORD</span>
<span class="m" style="left:1765.5px;top:758.8px;">5OO</span>
<span class="m" style="left:1186.7px;top:787.3px;">O</span>
<span class="m" style="left:1231.7px;top:787.3px;">OOOO42</span>
<span class="m" style="left:1321.3px;top:787.3px;">OOO5OO</span>
<span class="m" style="left:1411.6px;top:787.3px;">/@/&lt;1&gt;</span>
<span class="m" style="left:1542.5px;top:787.3px;">H</span>
<span class="m" style="left:1693.5px;top:787.3px;">.WORD</span>
<span class="m" style="left:1765.5px;top:787.3px;">5OO</span>
<span class="m" style="left:1186.7px;top:815.8px;">O</span>
<span class="m" style="left:1231.7px;top:815.8px;">OOOO44</span>
<span class="m" style="left:1321.3px;top:815.8px;">OOO4OO</span>
<span class="m" style="left:1411.6px;top:815.8px;">&lt;O&gt;&lt;1&gt;</span>
<span class="m" style="left:1542.5px;top:815.8px;">FP</span>
<span class="m" style="left:1693.5px;top:815.8px;">.WORD</span>
<span class="m" style="left:1765.5px;top:815.8px;">4OO</span>
<span class="s" style="left:1174.76px;top:845.9px;font-size:17.5px;transform:scaleX(1.0437);transform-origin:0 0">Unknown</span>
<span class="s" style="left:1385.46px;top:845.9px;font-size:17.5px;transform:scaleX(1.0437);transform-origin:0 0">Unknown</span>
<span class="s" style="left:1595.90px;top:845.9px;font-size:17.5px;transform:scaleX(1.0000);transform-origin:0 0">0</span>
<span class="s" style="left:1807.06px;top:845.9px;font-size:17.5px;transform:scaleX(1.0437);transform-origin:0 0">Unknown</span>
<span class="s" style="left:2017.10px;top:845.9px;font-size:17.5px;transform:scaleX(1.0000);transform-origin:0 0">0</span>
<div class="a" style="left:1175px;top:864px;width:1054px;height:598px;background:#a9abaf;"></div>
<div class="a" style="left:1178px;top:867px;width:1048px;height:592px;background:#fff;"></div>
<div class="a" style="left:2199px;top:868px;width:26px;height:591px;background:#f0f0f0;"></div>
<div class="a" style="left:2199px;top:895px;width:26px;height:41px;background:#cdcdcd;"></div>
<svg class="a" style="left:2206px;top:877px" width="12" height="9" viewBox="0 0 12 9"><path d="M1 7.5L6 2.5L11 7.5" stroke="#a0a0a0" stroke-width="2" fill="none"/></svg>
<svg class="a" style="left:2206px;top:1444px" width="12" height="9" viewBox="0 0 12 9"><path d="M1 1.5L6 6.5L11 1.5" stroke="#a0a0a0" stroke-width="2" fill="none"/></svg>
<span class="m" style="left:1693.5px;top:872.1px;">.MCALL</span>
<span class="m" style="left:1765.9px;top:872.1px;">.EXIT, .PRINT</span>
<span class="m" style="left:1186.7px;top:900.6px;">O</span>
<span class="m" style="left:1231.7px;top:900.6px;">OOOOOO</span>
<span class="m" style="left:1321.3px;top:900.6px;">OOOOOO</span>
<span class="m" style="left:1411.6px;top:900.6px;">&lt;O&gt;&lt;O&gt;</span>
<span class="m" style="left:1693.5px;top:900.6px;">.WORD</span>
<span class="m" style="left:1765.5px;top:900.6px;">O</span>
<span class="m" style="left:1186.7px;top:929.1px;">O</span>
<span class="m" style="left:1231.7px;top:929.1px;">OOOOO2</span>
<span class="m" style="left:1321.3px;top:929.1px;">OOOOOO</span>
<span class="m" style="left:1411.6px;top:929.1px;">&lt;O&gt;&lt;O&gt;</span>
<span class="m" style="left:1693.5px;top:929.1px;">.WORD</span>
<span class="m" style="left:1765.5px;top:929.1px;">O</span>
<span class="m" style="left:1186.7px;top:957.6px;">O</span>
<span class="m" style="left:1231.7px;top:957.6px;">OOOOO4</span>
<span class="m" style="left:1321.3px;top:957.6px;">OOOOOO</span>
<span class="m" style="left:1411.6px;top:957.6px;">&lt;O&gt;&lt;O&gt;</span>
<span class="m" style="left:1693.5px;top:957.6px;">.WORD</span>
<span class="m" style="left:1765.5px;top:957.6px;">O</span>
<span class="m" style="left:1186.7px;top:986.1px;">O</span>
<span class="m" style="left:1231.7px;top:986.1px;">OOOOO6</span>
<span class="m" style="left:1321.3px;top:986.1px;">OOOOOO</span>
<span class="m" style="left:1411.6px;top:986.1px;">&lt;O&gt;&lt;O&gt;</span>
<span class="m" style="left:1693.5px;top:986.1px;">.WORD</span>
<span class="m" style="left:1765.5px;top:986.1px;">O</span>
<span class="m" style="left:1186.7px;top:1014.6px;">O</span>
<span class="m" style="left:1231.7px;top:1014.6px;">OOOO1O</span>
<span class="m" style="left:1321.3px;top:1014.6px;">OOOOOO</span>
<span class="m" style="left:1411.6px;top:1014.6px;">&lt;O&gt;&lt;O&gt;</span>
<span class="m" style="left:1693.5px;top:1014.6px;">.WORD</span>
<span class="m" style="left:1765.5px;top:1014.6px;">O</span>
<span class="m" style="left:1186.7px;top:1043.1px;">O</span>
<span class="m" style="left:1231.7px;top:1043.1px;">OOOO12</span>
<span class="m" style="left:1321.3px;top:1043.1px;">OOOOOO</span>
<span class="m" style="left:1411.6px;top:1043.1px;">&lt;O&gt;&lt;O&gt;</span>
<span class="m" style="left:1693.5px;top:1043.1px;">.WORD</span>
<span class="m" style="left:1765.5px;top:1043.1px;">O</span>
<span class="m" style="left:1186.7px;top:1071.6px;">O</span>
<span class="m" style="left:1231.7px;top:1071.6px;">OOOO14</span>
<span class="m" style="left:1321.3px;top:1071.6px;">OOOOOO</span>
<span class="m" style="left:1411.6px;top:1071.6px;">&lt;O&gt;&lt;O&gt;</span>
<span class="m" style="left:1693.5px;top:1071.6px;">.WORD</span>
<span class="m" style="left:1765.5px;top:1071.6px;">O</span>
<span class="m" style="left:1186.7px;top:1100.1px;">O</span>
<span class="m" style="left:1231.7px;top:1100.1px;">OOOO16</span>
<span class="m" style="left:1321.3px;top:1100.1px;">OOOOOO</span>
<span class="m" style="left:1411.6px;top:1100.1px;">&lt;O&gt;&lt;O&gt;</span>
<span class="m" style="left:1693.5px;top:1100.1px;">.WORD</span>
<span class="m" style="left:1765.5px;top:1100.1px;">O</span>
<span class="m" style="left:1186.7px;top:1128.6px;">O</span>
<span class="m" style="left:1231.7px;top:1128.6px;">OOOO2O</span>
<span class="m" style="left:1321.3px;top:1128.6px;">OOOOOO</span>
<span class="m" style="left:1411.6px;top:1128.6px;">&lt;O&gt;&lt;O&gt;</span>
<span class="m" style="left:1693.5px;top:1128.6px;">.WORD</span>
<span class="m" style="left:1765.5px;top:1128.6px;">O</span>
<span class="m" style="left:1186.7px;top:1157.1px;">O</span>
<span class="m" style="left:1231.7px;top:1157.1px;">OOOO22</span>
<span class="m" style="left:1321.3px;top:1157.1px;">OOOOOO</span>
<span class="m" style="left:1411.6px;top:1157.1px;">&lt;O&gt;&lt;O&gt;</span>
<span class="m" style="left:1693.5px;top:1157.1px;">.WORD</span>
<span class="m" style="left:1765.5px;top:1157.1px;">O</span>
<span class="m" style="left:1186.7px;top:1185.6px;">O</span>
<span class="m" style="left:1231.7px;top:1185.6px;">OOOO24</span>
<span class="m" style="left:1321.3px;top:1185.6px;">OOOOOO</span>
<span class="m" style="left:1411.6px;top:1185.6px;">&lt;O&gt;&lt;O&gt;</span>
<span class="m" style="left:1693.5px;top:1185.6px;">.WORD</span>
<span class="m" style="left:1765.5px;top:1185.6px;">O</span>
<span class="m" style="left:1186.7px;top:1214.1px;">O</span>
<span class="m" style="left:1231.7px;top:1214.1px;">OOOO26</span>
<span class="m" style="left:1321.3px;top:1214.1px;">OOOOOO</span>
<span class="m" style="left:1411.6px;top:1214.1px;">&lt;O&gt;&lt;O&gt;</span>
<span class="m" style="left:1693.5px;top:1214.1px;">.WORD</span>
<span class="m" style="left:1765.5px;top:1214.1px;">O</span>
<span class="m" style="left:1186.7px;top:1242.6px;">O</span>
<span class="m" style="left:1231.7px;top:1242.6px;">OOOO3O</span>
<span class="m" style="left:1321.3px;top:1242.6px;">OOOOOO</span>
<span class="m" style="left:1411.6px;top:1242.6px;">&lt;O&gt;&lt;O&gt;</span>
<span class="m" style="left:1693.5px;top:1242.6px;">.WORD</span>
<span class="m" style="left:1765.5px;top:1242.6px;">O</span>
<span class="m" style="left:1186.7px;top:1271.1px;">O</span>
<span class="m" style="left:1231.7px;top:1271.1px;">OOOO32</span>
<span class="m" style="left:1321.3px;top:1271.1px;">OOOOOO</span>
<span class="m" style="left:1411.6px;top:1271.1px;">&lt;O&gt;&lt;O&gt;</span>
<span class="m" style="left:1693.5px;top:1271.1px;">.WORD</span>
<span class="m" style="left:1765.5px;top:1271.1px;">O</span>
<span class="m" style="left:1186.7px;top:1299.6px;">O</span>
<span class="m" style="left:1231.7px;top:1299.6px;">OOOO34</span>
<span class="m" style="left:1321.3px;top:1299.6px;">OOOOOO</span>
<span class="m" style="left:1411.6px;top:1299.6px;">&lt;O&gt;&lt;O&gt;</span>
<span class="m" style="left:1693.5px;top:1299.6px;">.WORD</span>
<span class="m" style="left:1765.5px;top:1299.6px;">O</span>
<span class="m" style="left:1186.7px;top:1328.1px;">O</span>
<span class="m" style="left:1231.7px;top:1328.1px;">OOOO36</span>
<span class="m" style="left:1321.3px;top:1328.1px;">OOOOOO</span>
<span class="m" style="left:1411.6px;top:1328.1px;">&lt;O&gt;&lt;O&gt;</span>
<span class="m" style="left:1693.5px;top:1328.1px;">.WORD</span>
<span class="m" style="left:1765.5px;top:1328.1px;">O</span>
<span class="m" style="left:1186.7px;top:1356.6px;">O</span>
<span class="m" style="left:1231.7px;top:1356.6px;">OOOO4O</span>
<span class="m" style="left:1321.3px;top:1356.6px;">OOO5OO</span>
<span class="m" style="left:1411.6px;top:1356.6px;">/@/&lt;1&gt;</span>
<span class="m" style="left:1542.5px;top:1356.6px;">H</span>
<span class="m" style="left:1693.5px;top:1356.6px;">.WORD</span>
<span class="m" style="left:1765.5px;top:1356.6px;">5OO</span>
<span class="m" style="left:1186.7px;top:1385.1px;">O</span>
<span class="m" style="left:1231.7px;top:1385.1px;">OOOO42</span>
<span class="m" style="left:1321.3px;top:1385.1px;">OOO5OO</span>
<span class="m" style="left:1411.6px;top:1385.1px;">/@/&lt;1&gt;</span>
<span class="m" style="left:1542.5px;top:1385.1px;">H</span>
<span class="m" style="left:1693.5px;top:1385.1px;">.WORD</span>
<span class="m" style="left:1765.5px;top:1385.1px;">5OO</span>
<span class="m" style="left:1186.7px;top:1413.6px;">O</span>
<span class="m" style="left:1231.7px;top:1413.6px;">OOOO44</span>
<span class="m" style="left:1321.3px;top:1413.6px;">OOO4OO</span>
<span class="m" style="left:1411.6px;top:1413.6px;">&lt;O&gt;&lt;1&gt;</span>
<span class="m" style="left:1542.5px;top:1413.6px;">FP</span>
<span class="m" style="left:1693.5px;top:1413.6px;">.WORD</span>
<span class="m" style="left:1765.5px;top:1413.6px;">4OO</span>
<span class="m" style="left:1186.7px;top:1442.1px;">O</span>
<span class="m" style="left:1231.7px;top:1442.1px;">OOOO46</span>
<span class="m" style="left:1321.3px;top:1442.1px;">OOOOOO</span>
<span class="m" style="left:1411.6px;top:1442.1px;">&lt;O&gt;&lt;O&gt;</span>
<span class="m" style="left:1693.5px;top:1442.1px;">.WORD</span>
<span class="m" style="left:1765.5px;top:1442.1px;">O</span>
<div class="a" style="left:0px;top:0px;width:909px;height:1px;background:#5a5a5a;"></div>
<div class="a" style="left:1319px;top:0px;width:911px;height:1px;background:#111;"></div>
<div class="a" style="left:0px;top:0px;width:1px;height:1490px;background:#1a1a1a;"></div>
<div class="a" style="left:2228px;top:0px;width:2px;height:1490px;background:#1a1a1a;"></div>
<div class="a" style="left:0px;top:1488px;width:2230px;height:2px;background:#2a2a2a;"></div>
</body></html>
